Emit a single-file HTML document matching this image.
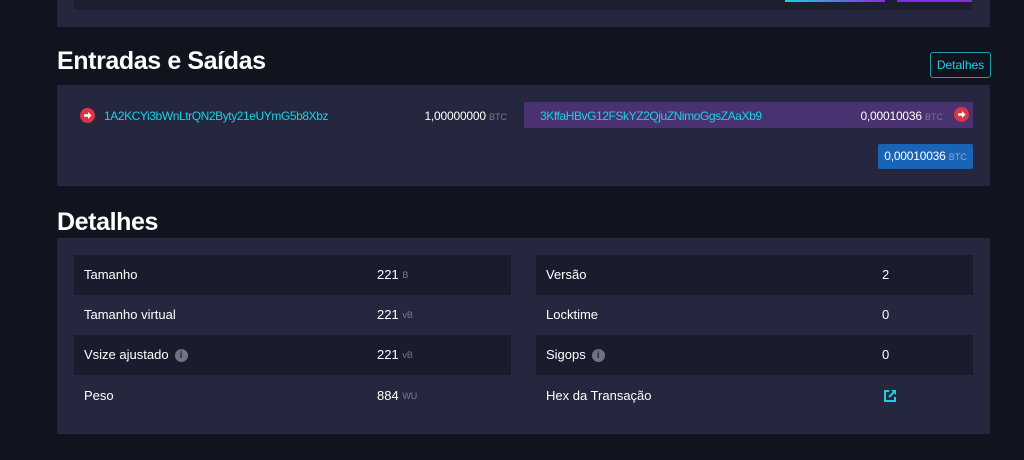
<!DOCTYPE html>
<html><head><meta charset="utf-8"><style>
*{margin:0;padding:0;box-sizing:border-box}
body{width:1024px;height:460px;background:#11131f;font-family:"Liberation Sans",sans-serif;color:#fff;position:relative;overflow:hidden}
.a{position:absolute}
.box{background:#24273e}
h2{position:absolute;font-size:25px;font-weight:bold;color:#fff;letter-spacing:-0.4px}
.t{font-size:12px;white-space:nowrap;letter-spacing:-0.2px}
.u{color:#777a8f;font-size:9px;letter-spacing:0}
.link{color:#1bd0e6}
.row{position:absolute;height:40px;font-size:13px}
.row>span{position:absolute;top:0;line-height:40px;white-space:nowrap;display:flex;align-items:center;height:40px}
.dark{background:#1a1c2e}
.ic{display:inline-block;width:13px;height:13px;border-radius:50%;background:#6f7384;color:#24273e;font-size:10px;font-weight:bold;font-style:normal;text-align:center;line-height:13px;margin-left:6px}
.arr{position:absolute;width:15px;height:15px;border-radius:50%;background:#dc3545}
</style></head><body>
<div class="a box" style="left:57px;top:0;width:933px;height:27px"></div>
<div class="a" style="left:74px;top:0;width:898px;height:10px;background:#1d1f31"></div>
<div class="a" style="left:785px;top:0;width:100px;height:2px;background:linear-gradient(90deg,#1bd0e6,#8a2be2)"></div>
<div class="a" style="left:897px;top:0;width:75px;height:2px;background:#8a2be2"></div>

<h2 style="left:57px;top:47px">Entradas e Saídas</h2>
<div class="a" style="left:930px;top:52px;width:61px;height:26px;border:1px solid #1a9fae;border-radius:3px;color:#1bd0e6;font-size:12px;text-align:center;line-height:24px">Detalhes</div>

<div class="a box" style="left:57px;top:85px;width:933px;height:101px"></div>
<div class="arr" style="left:80px;top:108px"><svg width="15" height="15" viewBox="0 0 15 15"><path d="M4 6.3h4V4l3.5 3.5L8 11V8.7H4z" fill="#fff"/></svg></div>
<div class="a t link" style="left:104px;top:109px;letter-spacing:-0.42px">1A2KCYi3bWnLtrQN2Byty21eUYmG5b8Xbz</div>
<div class="a t" style="left:407px;width:100px;text-align:right;top:109px">1,00000000 <span class="u">BTC</span></div>
<div class="a" style="left:524px;top:102px;width:449px;height:26px;background:#4a3271"></div>
<div class="a t link" style="left:540px;top:109px;letter-spacing:-0.42px">3KffaHBvG12FSkYZ2QjuZNimoGgsZAaXb9</div>
<div class="a t" style="left:843px;width:100px;text-align:right;top:109px">0,00010036 <span class="u">BTC</span></div>
<div class="arr" style="left:954px;top:107px"><svg width="15" height="15" viewBox="0 0 15 15"><path d="M4 6.3h4V4l3.5 3.5L8 11V8.7H4z" fill="#fff"/></svg></div>
<div class="a t" style="left:878px;top:144px;width:95px;height:25px;background:#1a64b8;border-radius:2px;line-height:25px;text-align:center">0,00010036 <span class="u" style="color:#8aa5cc">BTC</span></div>

<h2 style="left:57px;top:208px">Detalhes</h2>
<div class="a box" style="left:57px;top:238px;width:933px;height:196px"></div>

<div class="row dark" style="left:74px;top:255px;width:437px"><span style="left:10px">Tamanho</span><span style="left:303px">221&nbsp;<span class="u">B</span></span></div>
<div class="row" style="left:74px;top:295px;width:437px"><span style="left:10px">Tamanho virtual</span><span style="left:303px">221&nbsp;<span class="u">vB</span></span></div>
<div class="row dark" style="left:74px;top:335px;width:437px"><span style="left:10px">Vsize ajustado<i class="ic">i</i></span><span style="left:303px">221&nbsp;<span class="u">vB</span></span></div>
<div class="row" style="left:74px;top:376px;width:437px"><span style="left:10px">Peso</span><span style="left:303px">884&nbsp;<span class="u">WU</span></span></div>

<div class="row dark" style="left:536px;top:255px;width:437px"><span style="left:10px">Versão</span><span style="left:346px">2</span></div>
<div class="row" style="left:536px;top:295px;width:437px"><span style="left:10px">Locktime</span><span style="left:346px">0</span></div>
<div class="row dark" style="left:536px;top:335px;width:437px"><span style="left:10px">Sigops<i class="ic">i</i></span><span style="left:346px">0</span></div>
<div class="row" style="left:536px;top:376px;width:437px"><span style="left:10px">Hex da Transação</span>
<svg style="position:absolute;left:347px;top:13px" width="14" height="14" viewBox="0 0 14 14"><path d="M6 2H2v10h10V8" fill="none" stroke="#1bd0e6" stroke-width="2"/><path d="M8 1h5v5z" fill="#1bd0e6"/><path d="M12 2L6 8" stroke="#1bd0e6" stroke-width="2"/></svg></div>
</body></html>
